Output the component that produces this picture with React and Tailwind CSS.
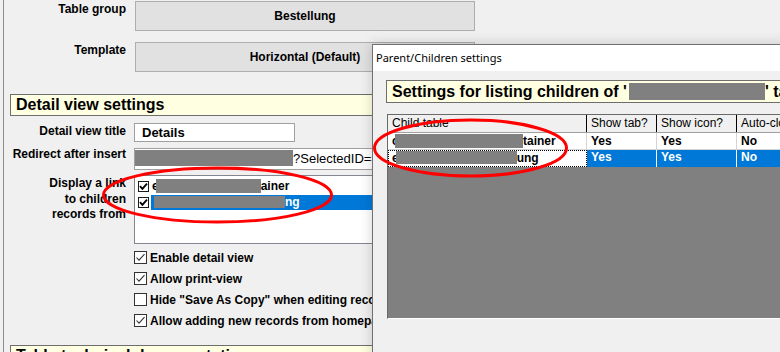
import React from 'react'

function WinCheck({ checked }) {
  return (
    <span className="w-[13px] h-[13px] border border-[#333333] bg-white flex items-center justify-center shrink-0">
      {checked && (
        <svg width="11" height="11" viewBox="0 0 11 11">
          <path d="M1.5 5.5 L4 8.2 L9.5 2.2" fill="none" stroke="#333333" strokeWidth="1.1" />
        </svg>
      )}
    </span>
  )
}

function ListCheck() {
  return (
    <span className="w-[11px] h-[11px] border border-[#1a1a1a] bg-white flex items-center justify-center shrink-0">
      <svg width="9" height="9" viewBox="0 0 9 9">
        <path d="M1 4.2 L3.4 6.8 L8 1.6" fill="none" stroke="#000000" strokeWidth="1.9" />
      </svg>
    </span>
  )
}

const options = [
  { label: 'Enable detail view', checked: true },
  { label: 'Allow print-view', checked: true },
  { label: 'Hide "Save As Copy" when editing records', checked: false },
  { label: 'Allow adding new records from homepage', checked: true },
]

export default function App() {
  return (
    <div className="relative w-[780px] h-[352px] overflow-hidden bg-[#f0f0f0] font-['Liberation_Sans',Arial,sans-serif] text-[12px] text-black">
      {/* Main settings page */}
      <div className="ml-[3px] h-full border-l border-[#8c8c8c] pt-[1px]">
        <div className="flex">
          <div className="w-[122px] text-right font-bold leading-[14px] pt-[1px]">Table group</div>
          <div className="ml-[9px] w-[340px] h-[30px] bg-[#e1e1e1] border border-[#adadad] flex items-center justify-center font-bold">
            Bestellung
          </div>
        </div>

        <div className="flex mt-[11px]">
          <div className="w-[122px] text-right font-bold leading-[14px] pt-[1px]">Template</div>
          <div className="ml-[9px] w-[340px] h-[30px] bg-[#e1e1e1] border border-[#adadad] flex items-center justify-center font-bold">
            Horizontal (Default)
          </div>
        </div>

        <div className="mt-[22px] ml-[6px] w-[770px] h-[22px] border border-[#6e6e6e] bg-[#ffffe1] pl-[5px] text-[16px] font-bold leading-[20px]">
          Detail view settings
        </div>

        <div className="flex mt-[7px]">
          <div className="w-[122px] text-right font-bold leading-[14px] pt-[1px]">Detail view title</div>
          <div className="ml-[8px] w-[161px] h-[19px] border border-[#a0a0a0] bg-white pl-[7px] text-[13px] font-bold leading-[17px]">
            Details
          </div>
        </div>

        <div className="flex mt-[6px]">
          <div className="w-[122px] text-right font-bold leading-[12px]">Redirect after insert</div>
          <div className="ml-[8px] w-[500px] h-[22px] border border-[#a0a0a0] bg-white flex items-start pt-[1px]">
            <span className="w-[158px] h-[16px] bg-[#808080] shrink-0" />
            <span className="text-[13px] leading-[16px] mt-[1px]">?SelectedID=#</span>
          </div>
        </div>

        <div className="flex mt-[5px]">
          <div className="w-[122px] text-right font-bold leading-[15.5px] pt-[1px]">
            Display a link<br />to children<br />records from
          </div>
          <div className="ml-[8px] w-[500px] h-[69px] border border-[#828790] bg-white pt-[2px] font-bold">
            <div className="flex items-center h-[16px] pl-[3px]">
              <ListCheck />
              <div className="ml-[2px] flex items-center pl-[1px]">
                <span>e</span>
                <span className="ml-[-3px] w-[105px] h-[14px] bg-[#808080]" />
                <span>ainer</span>
              </div>
            </div>
            <div className="flex items-center h-[16px] pl-[3px]">
              <ListCheck />
              <div className="ml-[2px] flex-1 h-[15px] bg-[#0078d7] text-white flex items-center pl-[3px]">
                <span className="w-[131px] h-[12px] bg-[#808080]" />
                <span>ng</span>
              </div>
            </div>
          </div>
        </div>

        <div className="mt-[7px] ml-[130px] flex flex-col gap-[8px]">
          {options.map((opt) => (
            <div key={opt.label} className="flex items-center h-[13px]">
              <WinCheck checked={opt.checked} />
              <span className="ml-[3px] font-bold whitespace-nowrap">{opt.label}</span>
            </div>
          ))}
        </div>

        <div className="mt-[18px] ml-[6px] w-[770px] h-[22px] border border-[#6e6e6e] bg-[#ffffe1] pl-[5px] text-[16px] font-bold leading-[20px]">
          Table technical documentation
        </div>
      </div>

      {/* Parent/Children settings dialog */}
      <div className="absolute left-[372px] top-[44px] w-[440px] h-[330px] border border-[#707070] bg-[#f0f0f0] shadow-[0_0_12px_rgba(0,0,0,0.18)]">
        <div className="h-[26px] bg-white pl-[3px] flex items-center font-['Noto_Sans',sans-serif] text-[11px]">
          Parent/Children settings
        </div>
        <div className="pt-[9px] pl-[13px]">
          <div className="w-[500px] h-[23px] border border-[#6e6e6e] bg-[#ffffe1] pl-[5px] flex items-center text-[16px] font-bold whitespace-nowrap">
            <span>Settings for listing children of '</span>
            <span className="ml-[2px] w-[136px] h-[17px] bg-[#808080]" />
            <span>' table</span>
          </div>

          <div className="mt-[11px] ml-[1px] w-[500px] h-[205px] border-t border-l border-[#696969] border-b border-b-white bg-[#808080]">
            <div className="flex h-[18px] bg-[#f0f0f0] border-b border-[#a0a0a0] leading-[17px]">
              <div className="w-[199px] border-r border-black pl-[4px]">Child table</div>
              <div className="w-[70px] border-r border-black pl-[4px]">Show tab?</div>
              <div className="w-[80px] border-r border-black pl-[4px]">Show icon?</div>
              <div className="flex-1 pl-[4px] whitespace-nowrap">Auto-close</div>
            </div>
            <div className="flex h-[17px] bg-white border-b border-[#d4d4d4] font-bold leading-[16px]">
              <div className="w-[199px] border-r border-[#d4d4d4] pl-[4px] flex items-center">
                <span className="w-[3px] overflow-hidden">c</span>
                <span className="w-[128px] h-[14px] bg-[#808080]" />
                <span>tainer</span>
              </div>
              <div className="w-[70px] border-r border-[#d4d4d4] pl-[4px]">Yes</div>
              <div className="w-[80px] border-r border-[#d4d4d4] pl-[4px]">Yes</div>
              <div className="flex-1 pl-[4px]">No</div>
            </div>
            <div className="flex h-[17px] font-bold leading-[15px]">
              <div className="w-[199px] bg-white border border-dotted border-black pl-[3px] flex items-start">
                <span>e</span>
                <span className="ml-[-3px] w-[121px] h-[13px] bg-[#808080]" />
                <span>ung</span>
              </div>
              <div className="w-[70px] bg-[#0078d7] text-white border-r border-white pl-[4px]">Yes</div>
              <div className="w-[80px] bg-[#0078d7] text-white border-r border-white pl-[4px]">Yes</div>
              <div className="flex-1 bg-[#0078d7] text-white pl-[4px]">No</div>
            </div>
          </div>
        </div>
      </div>

      {/* Red annotation marks */}
      <svg className="absolute inset-0 pointer-events-none" width="780" height="352">
        <ellipse cx="217.5" cy="195" rx="114" ry="27" fill="none" stroke="#ff0000" strokeWidth="3" />
        <ellipse cx="470.5" cy="148" rx="96" ry="28" fill="none" stroke="#ff0000" strokeWidth="3" />
      </svg>
    </div>
  )
}
